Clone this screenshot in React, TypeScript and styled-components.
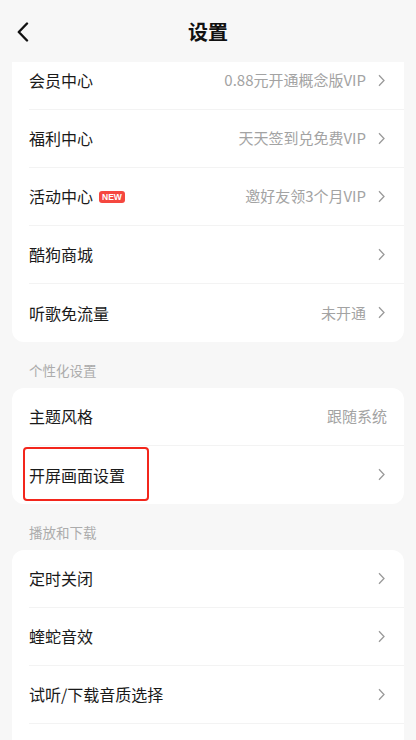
import React from "react";
import styled, { createGlobalStyle } from "styled-components";

const Global = createGlobalStyle`
  html, body { margin: 0; padding: 0; background: #f7f7f7; }
  body { font-family: "Noto Sans CJK SC", "Noto Sans", sans-serif; }
  * { box-sizing: border-box; }
`;

const Page = styled.div`
  width: 416px;
  height: 740px;
  display: flex;
  flex-direction: column;
  background: #f7f7f7;
  overflow: hidden;
`;

const Header = styled.header`
  height: 62px;
  flex: 0 0 62px;
  display: grid;
  grid-template-columns: 60px 1fr 60px;
  align-items: center;
  background: #f7f7f7;
  position: relative;
  z-index: 1;
`;

const BackBtn = styled.div`
  display: flex;
  align-items: center;
  padding-left: 16px;
  padding-top: 2px;
`;

const Title = styled.h1`
  margin: 0;
  text-align: center;
  font-size: 20px;
  font-weight: 700;
  color: #111;
  line-height: 28px;
  padding-top: 2px;
`;

const Scroll = styled.div`
  flex: 1;
  overflow: hidden;
  padding: 0 12px;
`;

const Inner = styled.div`
  margin-top: -10px;
`;

const Card = styled.div<{ $flatTop?: boolean }>`
  background: #fff;
  border-radius: ${(p) => (p.$flatTop ? "0 0 12px 12px" : "12px")};
  overflow: hidden;
`;

const Row = styled.div<{ $last?: boolean }>`
  height: 58px;
  display: flex;
  align-items: center;
  margin-left: 17px;
  padding-right: 17px;
  padding-bottom: 1px;
  border-bottom: ${(p) => (p.$last ? "none" : "1px solid #f3f3f3")};
  position: relative;
`;

const Label = styled.span`
  font-size: 16px;
  color: #1a1a1a;
  line-height: 22px;
`;

const Badge = styled.span`
  margin-left: 6px;
  background: #f5473f;
  color: #fff;
  font-family: "Liberation Sans", Arial, sans-serif;
  font-weight: 700;
  font-size: 8.5px;
  line-height: 12px;
  height: 12px;
  padding: 0 3px;
  border-radius: 3px;
  margin-top: 1px;
`;

const Spacer = styled.div`
  flex: 1;
`;

const Value = styled.span`
  font-size: 15px;
  color: #a3a3a3;
  line-height: 22px;
`;

const ChevronWrap = styled.span`
  display: flex;
  align-items: center;
  margin-left: 12px;
  margin-right: 2px;
`;

const SectionLabel = styled.div`
  padding: 19px 0 9px 17px;
  font-size: 13.5px;
  line-height: 18px;
  color: #acacac;
`;

const Highlight = styled.div`
  position: absolute;
  left: -6px;
  top: 1px;
  width: 126px;
  height: 54px;
  border: 2px solid #f3261c;
  border-radius: 4px;
  pointer-events: none;
`;

const Chevron = () => (
  <svg width="7" height="13" viewBox="0 0 7 13">
    <path d="M1 1.2 L6 6.5 L1 11.8" fill="none" stroke="#9a9a9a" strokeWidth="1.3" />
  </svg>
);

const BackIcon = () => (
  <svg width="14" height="20" viewBox="0 0 14 20">
    <path d="M11 1.5 L2.8 10 L11 18.5" fill="none" stroke="#111" strokeWidth="2.4" strokeLinecap="round" strokeLinejoin="round" />
  </svg>
);

type Item = { label: string; value?: string; badge?: boolean; chevron?: boolean; highlight?: boolean };

const Item: React.FC<{ item: Item; last?: boolean }> = ({ item, last }) => (
  <Row $last={last}>
    <Label>{item.label}</Label>
    {item.badge && <Badge>NEW</Badge>}
    {item.highlight && <Highlight />}
    <Spacer />
    {item.value && <Value>{item.value}</Value>}
    {item.chevron !== false && (
      <ChevronWrap>
        <Chevron />
      </ChevronWrap>
    )}
  </Row>
);

const group1: Item[] = [
  { label: "会员中心", value: "0.88元开通概念版VIP" },
  { label: "福利中心", value: "天天签到兑免费VIP" },
  { label: "活动中心", value: "邀好友领3个月VIP", badge: true },
  { label: "酷狗商城" },
  { label: "听歌免流量", value: "未开通" },
];

const group2: Item[] = [
  { label: "主题风格", value: "跟随系统", chevron: false },
  { label: "开屏画面设置", highlight: true },
];

const group3: Item[] = [
  { label: "定时关闭" },
  { label: "蝰蛇音效" },
  { label: "试听/下载音质选择" },
];

const FillerRow = styled.div`
  height: 58px;
`;

export default function App() {
  return (
    <Page>
      <Global />
      <Header>
        <BackBtn>
          <BackIcon />
        </BackBtn>
        <Title>设置</Title>
        <div />
      </Header>
      <Scroll>
        <Inner>
          <Card $flatTop>
            {group1.map((it, i) => (
              <Item key={it.label} item={it} last={i === group1.length - 1} />
            ))}
          </Card>
          <SectionLabel>个性化设置</SectionLabel>
          <Card>
            {group2.map((it, i) => (
              <Item key={it.label} item={it} last={i === group2.length - 1} />
            ))}
          </Card>
          <SectionLabel>播放和下载</SectionLabel>
          <Card>
            {group3.map((it) => (
              <Item key={it.label} item={it} />
            ))}
            <FillerRow />
          </Card>
        </Inner>
      </Scroll>
    </Page>
  );
}
